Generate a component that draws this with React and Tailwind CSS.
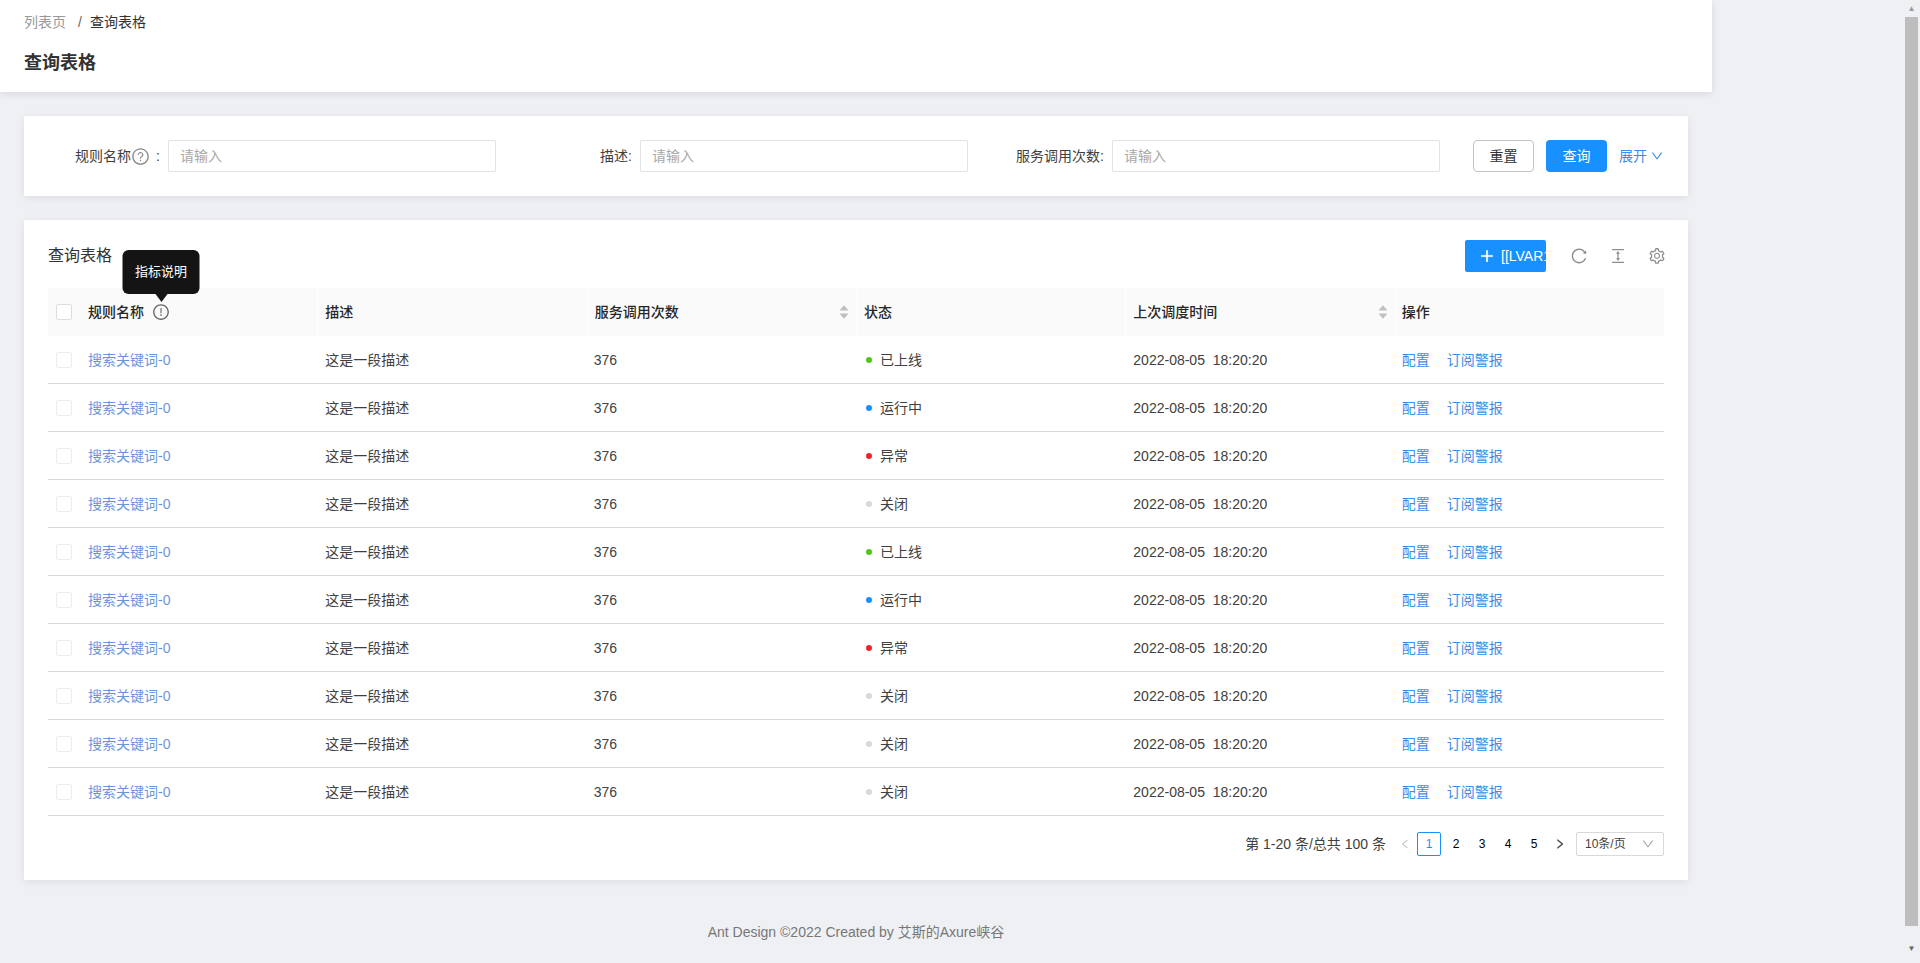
import {
  AiOutlineQuestionCircle,
  AiOutlineExclamationCircle,
  AiOutlineDown,
  AiOutlineLeft,
  AiOutlineRight,
  AiOutlinePlus,
  AiOutlineReload,
  AiOutlineColumnHeight,
  AiOutlineSetting,
  AiFillCaretUp,
  AiFillCaretDown,
} from 'react-icons/ai';

const statuses = [
  ['已上线', 'bg-[#52c41a]'],
  ['运行中', 'bg-[#1890ff]'],
  ['异常', 'bg-[#f5222d]'],
  ['关闭', 'bg-[#d9d9d9]'],
  ['已上线', 'bg-[#52c41a]'],
  ['运行中', 'bg-[#1890ff]'],
  ['异常', 'bg-[#f5222d]'],
  ['关闭', 'bg-[#d9d9d9]'],
  ['关闭', 'bg-[#d9d9d9]'],
  ['关闭', 'bg-[#d9d9d9]'],
];

const fontStack = "font-['Liberation_Sans','Noto_Sans_CJK_SC',sans-serif]";

function Field({ label }) {
  return (
    <div className="flex w-[448px] items-center">
      <div className="flex w-[120px] items-center justify-end pr-2 text-sm text-[#404040]">{label}</div>
      <input
        placeholder="请输入"
        className="h-8 w-[328px] rounded-[1px] border border-[#e3e3e3] px-[11px] text-sm outline-none placeholder:text-[#a8a8a8]"
      />
    </div>
  );
}

function Sorter() {
  return (
    <span className="absolute right-[6px] top-1/2 flex -translate-y-1/2 flex-col text-[#bfbfbf]">
      <AiFillCaretUp size={12} className="-mb-[4px]" />
      <AiFillCaretDown size={12} />
    </span>
  );
}

function HeadCell({ children, sort, pad = 'border-l-2 border-white/60 pl-[6px]' }) {
  return (
    <div className={`relative flex h-full items-center text-sm font-medium text-[#262626] ${pad}`}>
      {children}
      {sort && <Sorter />}
    </div>
  );
}

function Row({ status }) {
  return (
    <div className="grid h-12 grid-cols-6 items-center border-b border-[#d9d9d9] text-sm text-[#404040]">
      <div className="flex items-center pl-2">
        <span className="h-4 w-4 rounded-[2px] border border-[#ececec]" />
        <a className="ml-4 text-[#6c95de]">搜索关键词-0</a>
      </div>
      <div className="pl-2">这是一段描述</div>
      <div className="pl-[7px]">376</div>
      <div className="flex items-center pl-[10px]">
        <span className={`h-[6px] w-[6px] rounded-full ${status[1]}`} />
        <span className="ml-2">{status[0]}</span>
      </div>
      <div className="whitespace-pre pl-2">2022-08-05  18:20:20</div>
      <div className="flex gap-[17px] pl-[7px] text-[#3b8de8]">
        <a>配置</a>
        <a>订阅警报</a>
      </div>
    </div>
  );
}

export default function App() {
  return (
    <div className={`flex h-[963px] overflow-hidden bg-[#eff0f4] ${fontStack}`}>
      <div className="w-[1712px]">
        <header className="h-[92px] bg-white px-6 pt-[11px] shadow-[0_2px_8px_rgba(0,0,0,0.1)]">
          <div className="flex h-[22px] items-center text-sm">
            <span className="text-[#999]">列表页</span>
            <span className="ml-3 mr-2 text-[#666]">/</span>
            <span className="text-[#333]">查询表格</span>
          </div>
          <h1 className="mt-[18px] text-lg font-semibold leading-6 text-[#333]">查询表格</h1>
        </header>

        <main className="px-6 pt-6">
          <section className="flex h-20 items-center gap-6 bg-white px-6 shadow-[0_2px_8px_rgba(0,0,0,0.08)]">
            <Field
              label={
                <>
                  规则名称
                  <AiOutlineQuestionCircle size={19} className="text-[#8c8c8c]" />
                  <span className="ml-[6px]">:</span>
                </>
              }
            />
            <Field label="描述:" />
            <Field label="服务调用次数:" />
            <div className="flex flex-1 items-center justify-end">
              <button className="h-8 w-[61px] rounded-[4px] border border-[#c4c4c4] bg-white text-sm text-[#333]">重置</button>
              <button className="ml-3 h-8 w-[61px] rounded-[4px] bg-[#1890ff] text-sm text-white">查询</button>
              <a className="ml-3 flex items-center gap-[3px] text-sm text-[#3b8de8]">
                展开
                <AiOutlineDown size={14} />
              </a>
            </div>
          </section>

          <section className="mt-6 bg-white px-6 pb-6 pt-5 shadow-[0_2px_8px_rgba(0,0,0,0.08)]">
            <div className="mb-4 flex h-8 items-center justify-between">
              <h2 className="text-base font-normal text-[#333]">查询表格</h2>
              <div className="-mr-[2px] flex items-center">
                <button className="flex h-8 w-[81px] items-center overflow-hidden whitespace-nowrap rounded-[2px] bg-[#1890ff] pl-[14px] text-sm text-white">
                  <AiOutlinePlus size={16} className="shrink-0 stroke-[40px]" />
                  <span className="ml-[6px]">[[LVAR1]]</span>
                </button>
                <div className="ml-6 flex items-center gap-[21px] text-[#8c8c8c]">
                  <AiOutlineReload size={18} />
                  <AiOutlineColumnHeight size={18} />
                  <AiOutlineSetting size={18} />
                </div>
              </div>
            </div>

            <div className="grid h-12 grid-cols-6 items-center bg-[#fafafa]">
              <HeadCell pad="pl-2">
                <span className="h-4 w-4 rounded-[2px] border border-[#dcdcdc] bg-white" />
                <span className="ml-4">规则名称</span>
                <span className="relative ml-2 flex">
                  <AiOutlineExclamationCircle size={18} className="text-[#666]" />
                  <span className="absolute bottom-[27px] left-1/2 flex h-11 w-[77px] -translate-x-1/2 items-center justify-center rounded-md bg-[#141414] text-[13px] font-normal text-white">
                    指标说明
                    <span className="absolute -bottom-[8px] left-1/2 h-0 w-0 -translate-x-1/2 border-x-[6px] border-t-[8px] border-x-transparent border-t-[#141414]" />
                  </span>
                </span>
              </HeadCell>
              <HeadCell>描述</HeadCell>
              <HeadCell sort>服务调用次数</HeadCell>
              <HeadCell>状态</HeadCell>
              <HeadCell sort>上次调度时间</HeadCell>
              <HeadCell pad="border-l-2 border-white/60 pl-[5px]">操作</HeadCell>
            </div>

            {statuses.map((status, i) => (
              <Row key={i} status={status} />
            ))}

            <div className="mt-4 flex h-6 items-center justify-end text-sm text-[#404040]">
              <span>第 1-20 条/总共 100 条</span>
              <span className="ml-[7px] flex w-6 justify-center text-[#bfbfbf]"><AiOutlineLeft size={12} /></span>
              <span className="mr-[1px] flex h-6 w-6 items-center justify-center rounded-[2px] border border-[#1890ff] text-xs text-[#1890ff]">1</span>
              {[2, 3, 4, 5].map((n) => (
                <span key={n} className="ml-[2px] flex h-6 w-6 items-center justify-center text-xs text-black">{n}</span>
              ))}
              <span className="ml-[2px] flex w-6 justify-center text-[#444]"><AiOutlineRight size={12} className="stroke-[40px]" /></span>
              <div className="ml-1 flex h-6 w-[88px] items-center justify-between rounded-[2px] border border-[#d9d9d9] pl-2 pr-2 text-xs">
                <span>10条/页</span>
                <AiOutlineDown size={14} className="text-[#a6a6a6]" />
              </div>
            </div>
          </section>
        </main>

        <footer className="mt-[41px] text-center text-sm leading-[22px] text-[#777]">
          Ant Design ©2022 Created by 艾斯的Axure峡谷
        </footer>
      </div>

      <div className="ml-auto mr-[2px] flex w-[13px] flex-col items-center">
        <div className="flex h-[17px] items-center justify-center text-[8px] leading-none text-[#999]">▲</div>
        <div className="h-[909px] w-full bg-[#bdbdbd]" />
        <div className="mt-[19px] flex items-center justify-center text-[8px] leading-none text-[#666]">▼</div>
      </div>
    </div>
  );
}
